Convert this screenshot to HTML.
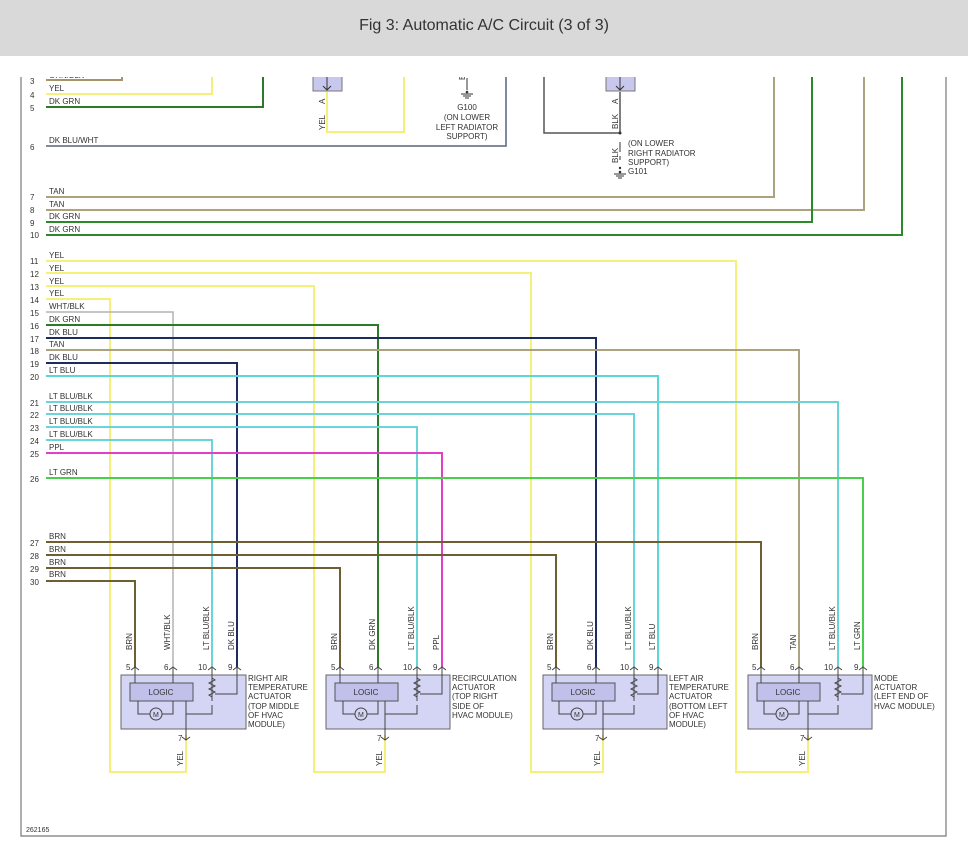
<!DOCTYPE html>
<html><head><meta charset="utf-8"><style>
html,body{margin:0;padding:0;background:#fff;}
.hd{position:absolute;left:0;top:0;width:968px;height:56px;background:#d9d9d9;font:16px "Liberation Sans",sans-serif;color:#333;text-align:center;line-height:52px;}
svg{position:absolute;left:0;top:77px;}
text{font-family:"Liberation Sans",sans-serif;fill:#333;}
</style></head><body>
<div class="hd">Fig 3: Automatic A/C Circuit (3 of 3)</div>
<svg width="968" height="779" viewBox="0 77 968 779" xmlns="http://www.w3.org/2000/svg">
<g fill="none" stroke="#777" stroke-width="1.2"><path d="M21 56V836H946V56"/></g>
<g font-size="8" fill="#444">
<text x="30" y="84">3</text><text x="30" y="98">4</text><text x="30" y="111">5</text><text x="30" y="150">6</text>
<text x="30" y="200">7</text><text x="30" y="213">8</text><text x="30" y="226">9</text><text x="30" y="238">10</text>
<text x="30" y="264">11</text><text x="30" y="277">12</text><text x="30" y="290">13</text><text x="30" y="303">14</text><text x="30" y="316">15</text><text x="30" y="329">16</text><text x="30" y="342">17</text><text x="30" y="354">18</text><text x="30" y="367">19</text><text x="30" y="380">20</text>
<text x="30" y="406">21</text><text x="30" y="418">22</text><text x="30" y="431">23</text><text x="30" y="444">24</text><text x="30" y="457">25</text><text x="30" y="482">26</text>
<text x="30" y="546">27</text><text x="30" y="559">28</text><text x="30" y="572">29</text><text x="30" y="585">30</text>
</g>
<g font-size="8" fill="#333">
<text x="49" y="78">ORN/BLK</text>
<text x="49" y="91">YEL</text><text x="49" y="104">DK GRN</text><text x="49" y="143">DK BLU/WHT</text>
<text x="49" y="194">TAN</text><text x="49" y="207">TAN</text><text x="49" y="219">DK GRN</text><text x="49" y="232">DK GRN</text>
<text x="49" y="258">YEL</text><text x="49" y="271">YEL</text><text x="49" y="284">YEL</text><text x="49" y="296">YEL</text><text x="49" y="309">WHT/BLK</text><text x="49" y="322">DK GRN</text><text x="49" y="335">DK BLU</text><text x="49" y="347">TAN</text><text x="49" y="360">DK BLU</text><text x="49" y="373">LT BLU</text>
<text x="49" y="399">LT BLU/BLK</text><text x="49" y="411">LT BLU/BLK</text><text x="49" y="424">LT BLU/BLK</text><text x="49" y="437">LT BLU/BLK</text><text x="49" y="450">PPL</text><text x="49" y="475">LT GRN</text>
<text x="49" y="539">BRN</text><text x="49" y="552">BRN</text><text x="49" y="565">BRN</text><text x="49" y="577">BRN</text>
</g>
<g fill="none" stroke-width="2">
<path d="M46 80H122V56" stroke="#a8926a"/>
<path d="M46 94H212V56" stroke="#f4f07a"/>
<path d="M46 107H263V56" stroke="#2a7a2a"/>
<path d="M46 146H506V56" stroke="#56627e" stroke-width="1.5"/>
<path d="M46 197H774V56" stroke="#aca27e"/>
<path d="M46 210H864V56" stroke="#aca27e"/>
<path d="M46 222H812V56" stroke="#2a8a2a"/>
<path d="M46 235H902V56" stroke="#2a8a2a"/>
<path d="M46 261H736V772H808V735" stroke="#f4f07a"/>
<path d="M46 273H531V772H603V735" stroke="#f4f07a"/>
<path d="M46 286H314V772H385V735" stroke="#f4f07a"/>
<path d="M46 299H110V772H186V735" stroke="#f4f07a"/>
<path d="M46 312H173V668" stroke="#b4b4b4" stroke-width="1.5"/>
<path d="M46 325H378V668" stroke="#2a7a2a"/>
<path d="M46 338H596V668" stroke="#1c2c5c"/>
<path d="M46 350H799V668" stroke="#aca27e"/>
<path d="M46 363H237V668" stroke="#1c2c5c"/>
<path d="M46 376H658V668" stroke="#5ad8d8"/>
<path d="M46 402H838V668" stroke="#6ad4d8"/>
<path d="M46 414H634V668" stroke="#6ad4d8"/>
<path d="M46 427H417V668" stroke="#6ad4d8"/>
<path d="M46 440H212V668" stroke="#6ad4d8"/>
<path d="M46 453H442V668" stroke="#e040c8"/>
<path d="M46 478H863V668" stroke="#48d048"/>
<path d="M46 542H761V668" stroke="#6e5e30"/>
<path d="M46 555H556V668" stroke="#6e5e30"/>
<path d="M46 568H340V668" stroke="#6e5e30"/>
<path d="M46 581H135V668" stroke="#6e5e30"/>
<path d="M327 92V132H404V56" stroke="#f4f07a"/>
<path d="M544 56V133H620" stroke="#555" stroke-width="1.5"/>
<path d="M620 92V133" stroke="#555" stroke-width="1.5"/>
</g>
<g fill="#c8c8ee" stroke="#777"><rect x="313" y="56" width="29" height="35"/><rect x="606" y="56" width="29" height="35"/></g>
<g stroke="#333" fill="none"><path d="M327 72V90M323 86l4 4 4-4M620 72V90M616 86l4 4 4-4M467 78V90M461 94h12M463 96h8M465 98h4M620 142V152M620 156V160M614 174h12M616 176h8M618 178h4"/></g>
<circle cx="467" cy="92" r="1.3" fill="#333"/><circle cx="620" cy="133" r="1.5" fill="#333"/><circle cx="620" cy="168" r="1.2" fill="#333"/><circle cx="620" cy="172" r="1.3" fill="#333"/>
<g font-size="8">
<text transform="translate(325,130) rotate(-90)">YEL</text><text transform="translate(325,104) rotate(-90)">A</text>
<text transform="translate(618,129) rotate(-90)">BLK</text><text transform="translate(618,104) rotate(-90)">A</text>
<text transform="translate(618,163) rotate(-90)">BLK</text><text transform="translate(465,80) rotate(-90)">E</text>
<text x="467" y="110" text-anchor="middle">G100</text><text x="467" y="120" text-anchor="middle">(ON LOWER</text><text x="467" y="130" text-anchor="middle">LEFT RADIATOR</text><text x="467" y="139" text-anchor="middle">SUPPORT)</text>
<text x="628" y="146">(ON LOWER</text><text x="628" y="156">RIGHT RADIATOR</text><text x="628" y="165">SUPPORT)</text><text x="628" y="174">G101</text>
</g>
<g font-size="8">
<g>
<rect x="121" y="675" width="125" height="54" fill="#d4d4f4" stroke="#666"/>
<rect x="130" y="683" width="63" height="18" fill="#c0c0ea" stroke="#555"/>
<text x="161" y="695" text-anchor="middle">LOGIC</text>
<g stroke="#444" fill="none"><path d="M135 668V683M173 668V683M212 668V701M237 668V694H215M138 701V714H150M162 714H173V701M186 701V740M186 714H212V705M208 670l4 -3 4 3M131 670l4-3 4 3M169 670l4-3 4 3M233 670l4-3 4 3M182 737l4 3 4-3M212 678l3 2-6 3 6 3-6 3 6 3-6 3 3 2"/><circle cx="156" cy="714" r="6"/></g>
<text x="153" y="717" font-size="7">M</text>
<text x="126" y="670">5</text><text x="164" y="670">6</text><text x="198" y="670">10</text><text x="228" y="670">9</text><text x="178" y="741">7</text>
<text transform="translate(132,650) rotate(-90)">BRN</text><text transform="translate(170,650) rotate(-90)">WHT/BLK</text><text transform="translate(209,650) rotate(-90)">LT BLU/BLK</text><text transform="translate(234,650) rotate(-90)">DK BLU</text><text transform="translate(183,766) rotate(-90)">YEL</text>
<text x="248" y="681">RIGHT AIR</text><text x="248" y="690">TEMPERATURE</text><text x="248" y="699">ACTUATOR</text><text x="248" y="709">(TOP MIDDLE</text><text x="248" y="718">OF HVAC</text><text x="248" y="727">MODULE)</text>
</g>
<g>
<rect x="326" y="675" width="124" height="54" fill="#d4d4f4" stroke="#666"/>
<rect x="335" y="683" width="63" height="18" fill="#c0c0ea" stroke="#555"/>
<text x="366" y="695" text-anchor="middle">LOGIC</text>
<g stroke="#444" fill="none"><path d="M340 668V683M378 668V683M417 668V701M442 668V694H420M343 701V714H355M367 714H378V701M385 701V740M385 714H417V705M413 670l4-3 4 3M336 670l4-3 4 3M374 670l4-3 4 3M438 670l4-3 4 3M381 737l4 3 4-3M417 678l3 2-6 3 6 3-6 3 6 3-6 3 3 2"/><circle cx="361" cy="714" r="6"/></g>
<text x="358" y="717" font-size="7">M</text>
<text x="331" y="670">5</text><text x="369" y="670">6</text><text x="403" y="670">10</text><text x="433" y="670">9</text><text x="377" y="741">7</text>
<text transform="translate(337,650) rotate(-90)">BRN</text><text transform="translate(375,650) rotate(-90)">DK GRN</text><text transform="translate(414,650) rotate(-90)">LT BLU/BLK</text><text transform="translate(439,650) rotate(-90)">PPL</text><text transform="translate(382,766) rotate(-90)">YEL</text>
<text x="452" y="681">RECIRCULATION</text><text x="452" y="690">ACTUATOR</text><text x="452" y="699">(TOP RIGHT</text><text x="452" y="709">SIDE OF</text><text x="452" y="718">HVAC MODULE)</text>
</g>
<g>
<rect x="543" y="675" width="124" height="54" fill="#d4d4f4" stroke="#666"/>
<rect x="552" y="683" width="63" height="18" fill="#c0c0ea" stroke="#555"/>
<text x="583" y="695" text-anchor="middle">LOGIC</text>
<g stroke="#444" fill="none"><path d="M556 668V683M596 668V683M634 668V701M658 668V694H637M559 701V714H571M583 714H596V701M603 701V740M603 714H634V705M630 670l4-3 4 3M552 670l4-3 4 3M592 670l4-3 4 3M654 670l4-3 4 3M599 737l4 3 4-3M634 678l3 2-6 3 6 3-6 3 6 3-6 3 3 2"/><circle cx="577" cy="714" r="6"/></g>
<text x="574" y="717" font-size="7">M</text>
<text x="547" y="670">5</text><text x="587" y="670">6</text><text x="620" y="670">10</text><text x="649" y="670">9</text><text x="595" y="741">7</text>
<text transform="translate(553,650) rotate(-90)">BRN</text><text transform="translate(593,650) rotate(-90)">DK BLU</text><text transform="translate(631,650) rotate(-90)">LT BLU/BLK</text><text transform="translate(655,650) rotate(-90)">LT BLU</text><text transform="translate(600,766) rotate(-90)">YEL</text>
<text x="669" y="681">LEFT AIR</text><text x="669" y="690">TEMPERATURE</text><text x="669" y="699">ACTUATOR</text><text x="669" y="709">(BOTTOM LEFT</text><text x="669" y="718">OF HVAC</text><text x="669" y="727">MODULE)</text>
</g>
<g>
<rect x="748" y="675" width="124" height="54" fill="#d4d4f4" stroke="#666"/>
<rect x="757" y="683" width="63" height="18" fill="#c0c0ea" stroke="#555"/>
<text x="788" y="695" text-anchor="middle">LOGIC</text>
<g stroke="#444" fill="none"><path d="M761 668V683M799 668V683M838 668V701M863 668V694H841M764 701V714H776M788 714H799V701M808 701V740M808 714H838V705M834 670l4-3 4 3M757 670l4-3 4 3M795 670l4-3 4 3M859 670l4-3 4 3M804 737l4 3 4-3M838 678l3 2-6 3 6 3-6 3 6 3-6 3 3 2"/><circle cx="782" cy="714" r="6"/></g>
<text x="779" y="717" font-size="7">M</text>
<text x="752" y="670">5</text><text x="790" y="670">6</text><text x="824" y="670">10</text><text x="854" y="670">9</text><text x="800" y="741">7</text>
<text transform="translate(758,650) rotate(-90)">BRN</text><text transform="translate(796,650) rotate(-90)">TAN</text><text transform="translate(835,650) rotate(-90)">LT BLU/BLK</text><text transform="translate(860,650) rotate(-90)">LT GRN</text><text transform="translate(805,766) rotate(-90)">YEL</text>
<text x="874" y="681">MODE</text><text x="874" y="690">ACTUATOR</text><text x="874" y="699">(LEFT END OF</text><text x="874" y="709">HVAC MODULE)</text>
</g>
</g>
<text x="26" y="832" font-size="7">262165</text>
</svg>
</body></html>
